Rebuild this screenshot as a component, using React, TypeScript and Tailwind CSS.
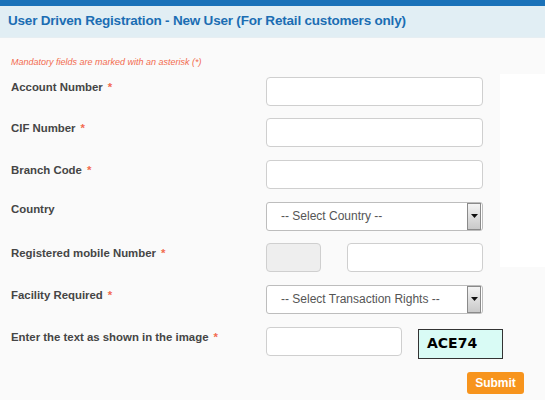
import React from 'react';

const Star = () => <span className="ml-[5px] text-[#f26b4f]">*</span>;

const TextBox = ({ className = 'w-[217px]', gray = false }: { className?: string; gray?: boolean }) => (
  <div
    className={`h-[29px] shrink-0 rounded-[4px] border border-[#cfcfcf] ${gray ? 'bg-[#eeeeee]' : 'bg-white'} ${className}`}
  />
);

const FakeSelect = ({ text }: { text: string }) => (
  <div className="flex h-[29px] w-[217px] items-center rounded-[3px] border border-[#bdbdbd] bg-white">
    <span className="flex-1 pl-[14px] text-[12px] text-[#555]">{text}</span>
    <span className="mr-px flex h-[27px] w-[14px] items-center justify-center border border-[#8a8a8a] bg-gradient-to-b from-[#f4f4f4] to-[#c9c9c9]">
      <svg width="7" height="4" viewBox="0 0 7 4">
        <path d="M0 0h7L3.5 4z" fill="#111" />
      </svg>
    </span>
  </div>
);

const Row = ({
  label,
  star = true,
  raised = false,
  children,
}: {
  label: string;
  star?: boolean;
  raised?: boolean;
  children: React.ReactNode;
}) => (
  <div className="flex items-start">
    <div
      className={`w-[255px] shrink-0 text-[11.4px] font-bold text-[#454545] ${raised ? 'mt-[-1px]' : 'pt-[2px]'}`}
    >
      {label}
      {star && <Star />}
    </div>
    {children}
  </div>
);

export default function App() {
  return (
    <div className="h-[400px] w-[545px] overflow-hidden bg-[#fafafa] font-['Liberation_Sans',Arial,sans-serif]">
      <div className="h-[6px] bg-[#1a72b9]" />
      <div className="flex h-[32px] items-center border-b border-[#e6eef2] bg-[#e1eef4] pl-[8px]">
        <h1 className="text-[13.5px] font-bold tracking-[-0.2px] text-[#1b6db3]">
          User Driven Registration - New User (For Retail customers only)
        </h1>
      </div>

      <div className="flex">
        <div className="w-[500px] shrink-0 pl-[11px]">
          <p className="mt-[18px] text-[9px] italic text-[#f26b4f]">Mandatory fields are marked with an asterisk (*)</p>

          <div className="mt-[7px] flex flex-col gap-[12.7px]">
            <Row label="Account Number">
              <TextBox />
            </Row>
            <Row label="CIF Number">
              <TextBox />
            </Row>
            <Row label="Branch Code">
              <TextBox />
            </Row>
            <Row label="Country" star={false} raised>
              <FakeSelect text="-- Select Country --" />
            </Row>
            <Row label="Registered mobile Number">
              <div className="flex gap-[26px]">
                <TextBox className="w-[55px]" gray />
                <TextBox className="w-[136px]" />
              </div>
            </Row>
            <Row label="Facility Required">
              <FakeSelect text="-- Select Transaction Rights --" />
            </Row>
            <Row label="Enter the text as shown in the image">
              <div className="flex items-start gap-[16px]">
                <TextBox className="w-[136px]" />
                <div className="mt-[2px] flex h-[30px] w-[85px] items-center border border-[#333] bg-[#d9fbf5] pl-[8px] font-['DejaVu_Sans',sans-serif] text-[14px] font-bold text-black">
                  ACE74
                </div>
              </div>
            </Row>
          </div>

          <div className="mt-[13px] flex justify-end">
            <button className="mr-[-24px] h-[22px] w-[57px] rounded-[3px] bg-[#f7941d] text-[12px] font-bold text-white">
              Submit
            </button>
          </div>
        </div>
        <div className="mt-[36px] h-[193px] flex-1 bg-white" />
      </div>
    </div>
  );
}
